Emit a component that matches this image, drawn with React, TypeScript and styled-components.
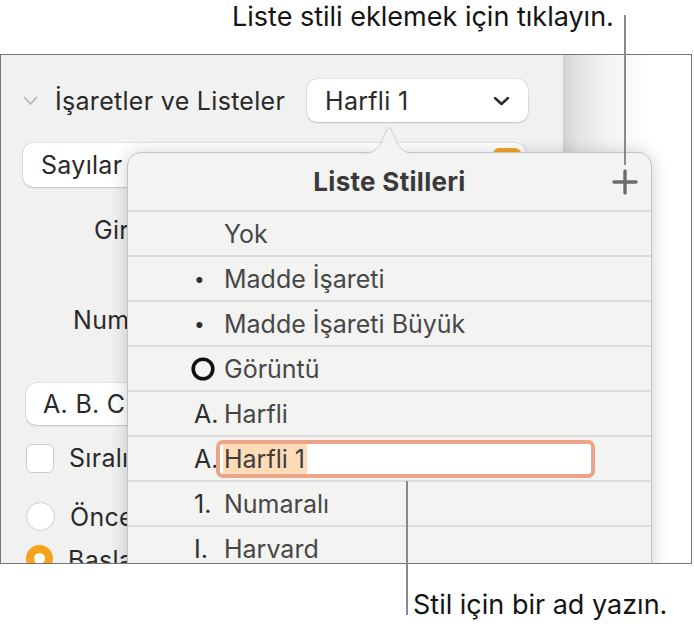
import React from 'react';
import styled, { createGlobalStyle } from 'styled-components';

const GlobalStyle = createGlobalStyle`
  html, body {
    margin: 0;
    padding: 0;
    background: #fff;
  }
  body {
    font-family: Inter, "Noto Sans", sans-serif;
    -webkit-font-smoothing: antialiased;
  }
`;

const Page = styled.div`
  position: relative;
  width: 694px;
  height: 633px;
  overflow: hidden;
`;

const Callout = styled.div<{ $left: number; $top: number }>`
  margin-top: ${({ $top }) => $top}px;
  padding-left: ${({ $left }) => $left}px;
  font-size: 27px;
  line-height: 33px;
  color: #141414;
  white-space: nowrap;
`;

const Leader = styled.div<{ $x: number; $y: number; $h: number }>`
  position: absolute;
  left: ${({ $x }) => $x}px;
  top: ${({ $y }) => $y}px;
  width: 2px;
  height: ${({ $h }) => $h}px;
  background: #8a8a8a;
  z-index: 5;
`;

const Frame = styled.div`
  position: relative;
  display: flex;
  width: 690px;
  height: 508px;
  margin-top: 21px;
  border: 1px solid #767676;
  overflow: hidden;
`;

const Sidebar = styled.div`
  display: flex;
  flex-direction: column;
  width: 562px;
  flex-shrink: 0;
  padding: 24px 35px 0 22px;
  box-sizing: border-box;
  background: #f1f1f1;
  color: #2a2a2a;
  font-size: 25px;
  letter-spacing: 0.3px;
`;

const Canvas = styled.div`
  flex: 1;
  border-left: 1px solid #cfcfcf;
  background: linear-gradient(90deg, #d4d4d4 0, #e4e4e4 14px, #f4f4f4 45px, #fff 85px);
`;

const SectionHeader = styled.div`
  display: flex;
  align-items: center;
  height: 43px;
`;

const SectionTitle = styled.span`
  margin-left: 17px;
  white-space: nowrap;
`;

const PopupButton = styled.div<{ $width: number; $height: number; $top?: number; $pad: number; $left?: number }>`
  display: flex;
  align-items: center;
  justify-content: space-between;
  width: ${({ $width }) => $width}px;
  height: ${({ $height }) => $height}px;
  margin-top: ${({ $top = 0 }) => $top}px;
  margin-left: ${({ $left = 0 }) => $left}px;
  padding: 0 18px 0 ${({ $pad }) => $pad}px;
  box-sizing: border-box;
  background: #fff;
  border-radius: 10px;
  box-shadow: 0 0 0 0.5px rgba(0, 0, 0, 0.12), 0 1px 2px rgba(0, 0, 0, 0.14);
  white-space: nowrap;
  flex-shrink: 0;
`;

const HeaderPopup = styled(PopupButton)`
  margin-left: auto;
`;

const AccentStepper = styled.div`
  align-self: flex-start;
  margin-top: 5px;
  margin-right: -13px;
  width: 28px;
  height: 34px;
  border-radius: 6px;
  background: #f5a623;
`;

const FieldLabel = styled.div<{ $top: number; $indent: number }>`
  margin-top: ${({ $top }) => $top}px;
  padding-left: ${({ $indent }) => $indent}px;
  line-height: 26px;
  white-space: nowrap;
`;

const OptionRow = styled.div<{ $top: number }>`
  display: flex;
  align-items: center;
  gap: 15px;
  margin-top: ${({ $top }) => $top}px;
  margin-left: 3px;
  height: 30px;
  white-space: nowrap;
`;

const CheckBox = styled.div`
  width: 26px;
  height: 27px;
  border-radius: 6px;
  background: #fff;
  border: 1px solid #cdcdcd;
  flex-shrink: 0;
`;

const Radio = styled.div<{ $on?: boolean }>`
  width: ${({ $on }) => ($on ? 11 : 27)}px;
  height: ${({ $on }) => ($on ? 11 : 27)}px;
  border-radius: 50%;
  background: #fff;
  border: ${({ $on }) => ($on ? '8.5px solid #f7a21b' : '1px solid #cdcdcd')};
  flex-shrink: 0;
  align-self: flex-start;
`;

const Popover = styled.div`
  position: absolute;
  left: 126px;
  top: 97px;
  width: 523px;
  height: 460px;
  background: #f3f3f2;
  border-radius: 14px 14px 0 0;
  border: 1px solid #c4c4c4;
  box-shadow: 0 2px 18px rgba(0, 0, 0, 0.2);
  z-index: 2;
`;

const Arrow = styled.svg`
  position: absolute;
  left: 231px;
  top: -27px;
`;

const PopoverHeader = styled.div`
  position: relative;
  display: flex;
  align-items: center;
  justify-content: center;
  height: 57px;
  border-bottom: 2px solid #dcdcdc;
  font-size: 26px;
  font-weight: 700;
  letter-spacing: 0.3px;
  color: #3a3a3a;
`;

const AddButton = styled.svg`
  position: absolute;
  right: 13px;
  top: 16px;
`;

const StyleRow = styled.div`
  display: grid;
  grid-template-columns: 33px 1fr;
  align-items: center;
  height: 42px;
  padding-top: 1px;
  padding-left: 63px;
  border-bottom: 2px solid #dcdcdc;
  font-size: 25px;
  color: #474747;
  white-space: nowrap;
`;

const EditRow = styled(StyleRow)`
  grid-template-columns: 25px 379px;
`;

const Marker = styled.span<{ $shift: number; $dot?: boolean }>`
  padding-left: ${({ $shift }) => $shift}px;
  font-size: ${({ $dot }) => ($dot ? 19 : 25)}px;
  color: #2e2e2e;
`;

const NameField = styled.div`
  display: flex;
  align-items: stretch;
  height: 30px;
  padding-left: 3px;
  border: 4px solid #eba487;
  border-radius: 7px;
  background: #fff;
`;

const Selection = styled.span`
  display: flex;
  align-items: center;
  padding: 0 2px 0 1px;
  background: #fddcb7;
  color: #3d3d3d;
`;

const Disclosure = () => (
  <svg width="15" height="10" viewBox="0 0 15 10">
    <polyline points="1.5,1.5 7.5,8 13.5,1.5" fill="none" stroke="#b3b3b3" strokeWidth="1.6" strokeLinecap="round" strokeLinejoin="round" />
  </svg>
);

const ChevronDown = () => (
  <svg width="17" height="10" viewBox="0 0 17 10">
    <polyline points="2,2 8.5,8 15,2" fill="none" stroke="#2b2b2b" strokeWidth="2.4" strokeLinecap="round" strokeLinejoin="round" />
  </svg>
);

const CircleGlyph = () => (
  <svg width="24" height="24" viewBox="0 0 24 24" style={{ display: 'block' }}>
    <circle cx="12" cy="12" r="9.8" fill="none" stroke="#111" strokeWidth="3.6" />
  </svg>
);

type Item = { marker: React.ReactNode; shift: number; name: string; dot?: boolean };

const items: Item[] = [
  { marker: '', shift: 0, name: 'Yok' },
  { marker: '•', shift: 3, name: 'Madde İşareti', dot: true },
  { marker: '•', shift: 3, name: 'Madde İşareti Büyük', dot: true },
  { marker: <CircleGlyph />, shift: 0, name: 'Görüntü' },
  { marker: 'A.', shift: 3, name: 'Harfli' },
];

const rest: Item[] = [
  { marker: '1.', shift: 3, name: 'Numaralı' },
  { marker: 'I.', shift: 3, name: 'Harvard' },
];

function StyleList() {
  return (
    <Popover>
      <Arrow width="60" height="29" viewBox="0 0 60 29">
        <path d="M0,28 C12,28 17,25 22,17 L28,3 Q30,0 32,3 L38,17 C43,25 48,28 60,28 Z" fill="#f3f3f2" />
        <path d="M0,28 C12,28 17,25 22,17 L28,3 Q30,0 32,3 L38,17 C43,25 48,28 60,28" fill="none" stroke="#cfcfcf" strokeWidth="1" />
        <rect x="0" y="27.5" width="60" height="2" fill="#f3f3f2" />
      </Arrow>
      <PopoverHeader>
        Liste Stilleri
        <AddButton width="26" height="26" viewBox="0 0 26 26">
          <path d="M13 2 V24 M2 13 H24" stroke="#6c6c6c" strokeWidth="3.4" strokeLinecap="round" />
        </AddButton>
      </PopoverHeader>
      {items.map((it) => (
        <StyleRow key={it.name}>
          <Marker $shift={it.shift} $dot={it.dot}>{it.marker}</Marker>
          <span>{it.name}</span>
        </StyleRow>
      ))}
      <EditRow>
        <Marker $shift={3}>A.</Marker>
        <NameField>
          <Selection>Harfli 1</Selection>
        </NameField>
      </EditRow>
      {rest.map((it) => (
        <StyleRow key={it.name}>
          <Marker $shift={it.shift}>{it.marker}</Marker>
          <span>{it.name}</span>
        </StyleRow>
      ))}
    </Popover>
  );
}

export default function App() {
  return (
    <Page>
      <GlobalStyle />
      <Callout $left={232} $top={0}>Liste stili eklemek için tıklayın.</Callout>
      <Frame>
        <Sidebar>
          <SectionHeader>
            <Disclosure />
            <SectionTitle>İşaretler ve Listeler</SectionTitle>
            <HeaderPopup $width={221} $height={43} $pad={18}>
              <span>Harfli 1</span>
              <ChevronDown />
            </HeaderPopup>
          </SectionHeader>
          <PopupButton $width={503} $height={44} $top={21} $pad={18}>
            <span>Sayılar</span>
            <AccentStepper />
          </PopupButton>
          <FieldLabel $top={30} $indent={71}>Girinti:</FieldLabel>
          <FieldLabel $top={64} $indent={50}>Numara:</FieldLabel>
          <PopupButton $width={480} $height={42} $top={50} $left={3} $pad={17}>
            <span>A. B. C. D.</span>
          </PopupButton>
          <OptionRow $top={18}>
            <CheckBox />
            <span>Sıralı liste</span>
          </OptionRow>
          <OptionRow $top={29}>
            <Radio />
            <span>Önceki</span>
          </OptionRow>
          <OptionRow $top={13}>
            <Radio $on />
            <span>Başlangıç:</span>
          </OptionRow>
        </Sidebar>
        <Canvas />
        <StyleList />
      </Frame>
      <Callout $left={413} $top={24}>Stil için bir ad yazın.</Callout>
      <Leader $x={624} $y={15} $h={150} />
      <Leader $x={406} $y={481} $h={134} />
    </Page>
  );
}
